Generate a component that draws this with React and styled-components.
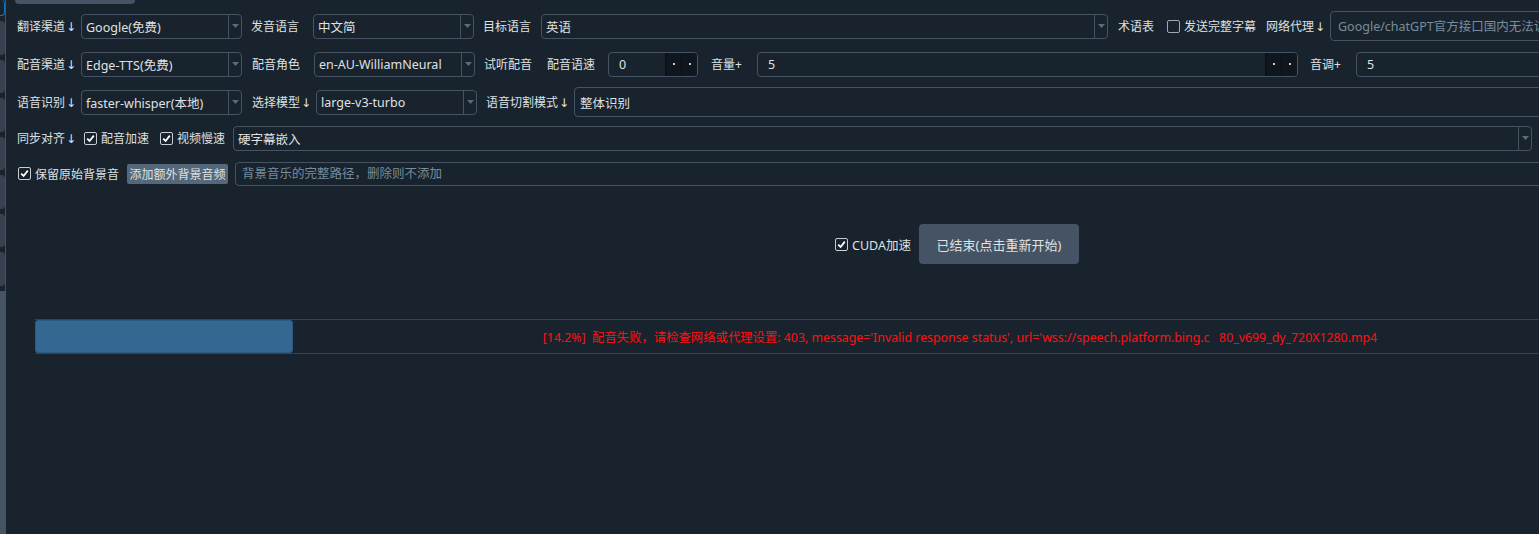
import React from "react";
import styled, { createGlobalStyle } from "styled-components";

const GlobalStyle = createGlobalStyle`
  html, body { margin: 0; padding: 0; background: #19232D; overflow: hidden; }
  body { font-family: "Noto Sans", "Noto Sans CJK SC", sans-serif; }
  #root { width: 1539px; height: 534px; overflow: hidden; }
  * { box-sizing: border-box; }
`;

const Shell = styled.div`
  display: flex;
  width: 1914px;
  height: 534px;
  background: #19232D;
  color: #DFE1E2;
  font-size: 12px;
`;

const Side = styled.div`
  flex: none;
  width: 6px;
  display: flex;
`;

const TabColumn = styled.div`
  width: 5px;
  display: flex;
  flex-direction: column;
  gap: 5px;
`;

const SideTab = styled.div`
  flex: none;
  height: ${(p) => (p.$selected ? 16 : 33.5)}px;
  background: ${(p) => (p.$selected ? "#19232D" : "#37414F")};
  border-radius: 0 4px 4px 0;
  border-right: 1px solid ${(p) => (p.$selected ? "#1A72BB" : "#37414F")};
  border-bottom: ${(p) => (p.$selected ? "1px solid #1A72BB" : "none")};
`;

const SideFill = styled.div`
  flex: 1;
  background: #455364;
`;

const SideLine = styled.div`
  width: 1px;
  background: #455364;
`;

const Main = styled.div`
  flex: 1;
  display: flex;
  flex-direction: column;
`;

const TopTab = styled.div`
  margin-left: 9px;
  width: 120px;
  height: 4px;
  background: #455364;
  border-radius: 0 0 4px 4px;
`;

const Form = styled.div`
  display: flex;
  flex-direction: column;
  gap: 8px;
  padding: 7px 0 0 11px;
`;

const Row = styled.div`
  display: flex;
  align-items: center;
  height: ${(p) => p.$h}px;
`;

const Label = styled.span`
  flex: none;
  display: inline-flex;
  align-items: center;
  width: ${(p) => p.$w}px;
  margin-left: ${(p) => p.$ml || 0}px;
  padding-top: 2px;
  white-space: nowrap;
  line-height: 16px;
`;

const Down = styled.span`
  font-family: "DejaVu Sans", sans-serif;
  font-size: 12px;
  color: #DFE1E2;
  margin-left: 1px;
`;

const Combo = styled.div`
  flex: none;
  width: ${(p) => p.$w}px;
  height: 25px;
  border: 1px solid #455364;
  border-radius: 4px;
  display: flex;
`;

const ComboText = styled.span`
  flex: 1;
  display: flex;
  align-items: center;
  padding-left: 4px;
  white-space: nowrap;
  overflow: hidden;
  font-size: 12.5px;
`;

const ComboArrow = styled.span`
  flex: none;
  width: 13px;
  border-left: 1px solid #455364;
  display: flex;
  align-items: center;
  justify-content: center;
`;

const Field = styled.input`
  flex: none;
  width: ${(p) => p.$w}px;
  height: ${(p) => p.$h}px;
  margin-left: ${(p) => p.$ml || 0}px;
  border: 1px solid #455364;
  border-radius: 4px;
  background: transparent;
  color: #DFE1E2;
  font: inherit;
  font-size: 12.5px;
  padding: 0 0 0 ${(p) => p.$pad || 5}px;
  outline: none;
  &::placeholder { color: #788D9C; opacity: 1; }
`;

const Spin = styled.div`
  flex: none;
  width: ${(p) => p.$w}px;
  height: 25px;
  border: 1px solid #455364;
  border-radius: 4px;
  display: flex;
  overflow: hidden;
`;

const SpinValue = styled.span`
  flex: 1;
  display: flex;
  align-items: center;
  padding-left: 10px;
  font-size: 12.5px;
`;

const SpinBtn = styled.span`
  flex: none;
  width: 16px;
  background: #10161D;
  border-left: 1px solid #0B0F14;
  display: flex;
  align-items: center;
  justify-content: center;
  &::after {
    content: "";
    width: 2px;
    height: 2px;
    background: #C9CDD0;
  }
`;

const CheckItem = styled.label`
  flex: none;
  display: inline-flex;
  align-items: center;
  gap: 4px;
  width: ${(p) => (p.$w ? `${p.$w}px` : "auto")};
  margin-left: ${(p) => p.$ml || 0}px;
  white-space: nowrap;
  font-size: ${(p) => p.$fs || 12}px;
`;

const Box = styled.span`
  flex: none;
  width: 13px;
  height: 13px;
  border: 1px solid ${(p) => (p.$checked ? "#C9CDD0" : "#9DA9B5")};
  border-radius: 2px;
  display: flex;
  align-items: center;
  justify-content: center;
`;

const AddButton = styled.button`
  flex: none;
  width: 101px;
  height: 20px;
  padding: 0;
  border: none;
  border-radius: 2px;
  background: #54687A;
  color: #DFE1E2;
  font: inherit;
  font-size: 12px;
`;

const ActionRow = styled.div`
  display: flex;
  justify-content: center;
  align-items: center;
  gap: 8px;
  height: 40px;
  margin-top: 36px;
  padding-right: 6px;
`;

const StartButton = styled.button`
  width: 160px;
  height: 40px;
  border: none;
  border-radius: 4px;
  background: #455364;
  color: #DFE1E2;
  font: inherit;
  font-size: 13px;
`;

const Progress = styled.div`
  position: relative;
  margin: 55px 29px 0;
  height: 35px;
  border-top: 1px solid #37414F;
  border-bottom: 1px solid #37414F;
  display: flex;
  align-items: center;
  justify-content: center;
`;

const Chunk = styled.div`
  position: absolute;
  left: 0;
  top: 0;
  bottom: 0;
  background: #346792;
  border-radius: 4px;
  box-shadow: inset 0 0 0 1px #2E5A80;
`;

const ProgressText = styled.span`
  position: relative;
  color: #FF1010;
  font-size: 12.35px;
  white-space: pre;
`;

function Arrow() {
  return (
    <svg width="7" height="4" viewBox="0 0 7 4">
      <path d="M0 0 H7 L3.5 4 Z" fill="#5C6B7A" />
    </svg>
  );
}

function Check({ checked }) {
  return (
    <Box $checked={checked}>
      {checked && (
        <svg width="9" height="9" viewBox="0 0 9 9">
          <path d="M1.2 4.6 L3.6 7 L7.8 1.6" fill="none" stroke="#FFFFFF" strokeWidth="1.8" />
        </svg>
      )}
    </Box>
  );
}

function Select({ w, children }) {
  return (
    <Combo $w={w}>
      <ComboText>{children}</ComboText>
      <ComboArrow>
        <Arrow />
      </ComboArrow>
    </Combo>
  );
}

function SpinBox({ w, value }) {
  return (
    <Spin $w={w}>
      <SpinValue>{value}</SpinValue>
      <SpinBtn />
      <SpinBtn />
    </Spin>
  );
}

function MenuLabel({ w, ml, children }) {
  return (
    <Label $w={w} $ml={ml}>
      {children}
      <Down>{"\u2193\uFE0E"}</Down>
    </Label>
  );
}

export default function App() {
  const progress = 14.2;
  return (
    <>
      <GlobalStyle />
      <Shell>
        <Side>
          <TabColumn>
            <SideTab $selected />
            {Array.from({ length: 7 }).map((_, i) => (
              <SideTab key={i} />
            ))}
            <SideFill />
          </TabColumn>
          <SideLine />
        </Side>
        <Main>
          <TopTab />
          <Form>
            <Row $h={30}>
              <MenuLabel w={64}>翻译渠道</MenuLabel>
              <Select w={161}>Google(免费)</Select>
              <Label $w={62} $ml={9}>发音语言</Label>
              <Select w={161}>中文简</Select>
              <Label $w={58} $ml={9}>目标语言</Label>
              <Select w={567}>英语</Select>
              <Label $w={49} $ml={10}>术语表</Label>
              <CheckItem $w={99}>
                <Check checked={false} />
                发送完整字幕
              </CheckItem>
              <MenuLabel w={64}>网络代理</MenuLabel>
              <Field $w={560} $h={30} $pad={7} placeholder="Google/chatGPT官方接口国内无法访问，请填写代理地址" />
            </Row>
            <Row $h={30}>
              <MenuLabel w={64}>配音渠道</MenuLabel>
              <Select w={161}>Edge-TTS(免费)</Select>
              <Label $w={62} $ml={10}>配音角色</Label>
              <Select w={161}>en-AU-WilliamNeural</Select>
              <Label $w={63} $ml={9}>试听配音</Label>
              <Label $w={61}>配音语速</Label>
              <SpinBox w={90} value="0" />
              <Label $w={46} $ml={13}>音量+</Label>
              <SpinBox w={541} value="5" />
              <Label $w={46} $ml={12}>音调+</Label>
              <SpinBox w={540} value="5" />
            </Row>
            <Row $h={30}>
              <MenuLabel w={64}>语音识别</MenuLabel>
              <Select w={161}>faster-whisper(本地)</Select>
              <MenuLabel w={64} ml={10}>选择模型</MenuLabel>
              <Select w={161}>large-v3-turbo</Select>
              <MenuLabel w={88} ml={9}>语音切割模式</MenuLabel>
              <Field $w={1320} $h={30} $pad={5} readOnly value="整体识别" />
            </Row>
            <Row $h={26}>
              <MenuLabel w={64}>同步对齐</MenuLabel>
              <CheckItem $w={76} $ml={3}>
                <Check checked />
                配音加速
              </CheckItem>
              <CheckItem $w={73}>
                <Check checked />
                视频慢速
              </CheckItem>
              <Select w={1299}>硬字幕嵌入</Select>
            </Row>
            <Row $h={29}>
              <CheckItem $w={109} $ml={1}>
                <Check checked />
                保留原始背景音
              </CheckItem>
              <AddButton>添加额外背景音频</AddButton>
              <Field $w={1660} $h={24} $ml={7} $pad={6} placeholder="背景音乐的完整路径，删除则不添加" />
            </Row>
          </Form>
          <ActionRow>
            <CheckItem $fs={12.5}>
              <Check checked />
              CUDA加速
            </CheckItem>
            <StartButton>已结束(点击重新开始)</StartButton>
          </ActionRow>
          <Progress>
            <Chunk style={{ width: `calc(${progress}% - 5px)` }} />
            <ProgressText>
              {"[14.2%]  配音失败，请检查网络或代理设置: 403, message='Invalid response status', url='wss://speech.platform.bing.c   80_v699_dy_720X1280.mp4"}
            </ProgressText>
          </Progress>
        </Main>
      </Shell>
    </>
  );
}
